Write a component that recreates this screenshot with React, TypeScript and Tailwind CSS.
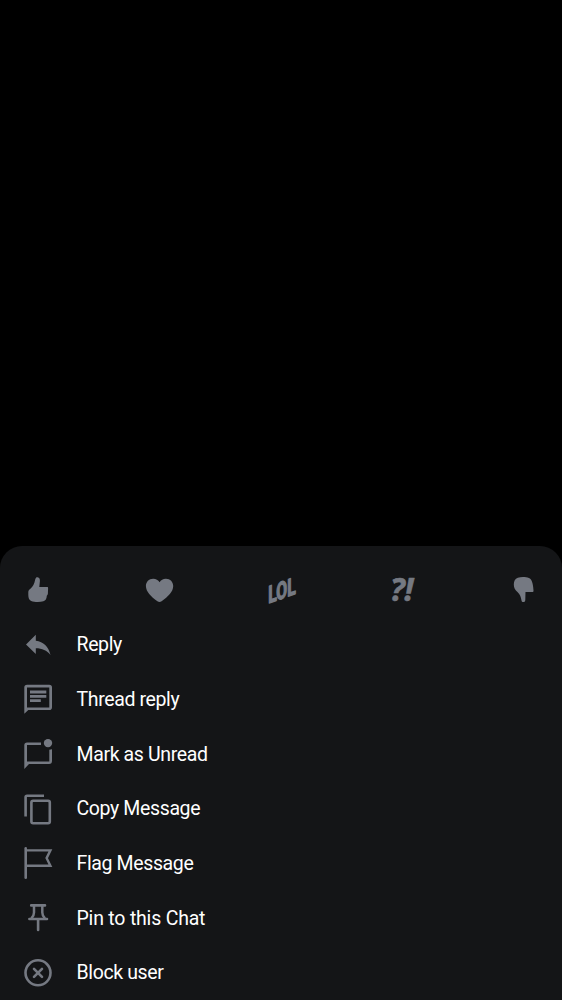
import type { ReactNode } from "react";

function Icon({ children }: { children: ReactNode }) {
  return (
    <svg viewBox="0 0 36 36" className="h-9 w-9 shrink-0 overflow-visible text-[#757982]" fill="none" stroke="currentColor" strokeWidth="2.6" aria-hidden="true">
      {children}
    </svg>
  );
}

const reactions: { name: string; art: ReactNode }[] = [
  {
    name: "like",
    art: (
      <path fill="currentColor" stroke="none" d="M15.2 7.6C15.8 5.3 16.6 5.1 17.6 5.3C19.5 5.6 20 7.2 19.9 9L19.3 15H27C27.9 15 28.2 15.5 28.1 16.4L27.9 21.5C27.8 22.6 27.4 23.1 26.8 23.7C26.7 26.5 25.5 28.7 23.4 29.3C20 30.2 14.5 30.2 11.2 29C9 28.1 8.4 26 8.3 23V20.2C8.3 18.6 9 17.8 10.4 16.7C12.9 14.8 14.4 12 15.2 7.6Z" />
    ),
  },
  {
    name: "love",
    art: (
      <path transform="translate(-0.6 0)" fill="currentColor" stroke="none" d="M18.2 10.2C19.5 7.8 22 6.6 24.6 6.7C28.8 6.8 31.8 9.8 31.8 14C31.8 19.8 26.8 24.5 20.2 29.2C18.7 30.3 17.5 30.3 16 29.2C9.4 24.5 4.6 19.8 4.5 14C4.5 9.8 7.5 6.8 11.7 6.7C14.3 6.6 16.8 7.8 18.2 10.2Z" />
    ),
  },
  {
    name: "laugh",
    art: (
      <text transform="translate(5.3 31.6) skewY(-20)" fill="currentColor" strokeWidth="1.4" strokeLinejoin="round" textLength="27.4" lengthAdjust="spacingAndGlyphs" className="font-['Roboto',sans-serif] text-[24px] font-bold">
        LOL
      </text>
    ),
  },
  {
    name: "surprise",
    art: (
      <g fill="currentColor" strokeWidth="0.6" strokeLinejoin="round" className="font-['Open_Sans',sans-serif] text-[32px] font-bold italic">
        <text x="5" y="29.3">?</text>
        <text x="19.2" y="29.3">!</text>
      </g>
    ),
  },
  {
    name: "dislike",
    art: (
      <path transform="translate(-0.6 0)" fill="currentColor" stroke="none" d="M8.4 12.5C8.4 9.4 9.6 6.5 12.4 5.7C15.8 4.8 20.5 4.9 23.5 6C26.4 7.2 27.3 10.8 27.8 15.2L28.1 18.5C28.2 19.6 27.8 20.1 26.8 20.1H20.1L19.9 27.7C19.9 29.4 19.2 30 18 30C16.9 30.1 16.4 29.6 16.1 28.4C15.5 25 14.6 22.3 12.3 20.2C9.6 17.8 8.4 15.7 8.4 12.5Z" />
    ),
  },
];

const actions: { label: string; tracking?: string; art: ReactNode }[] = [
  {
    label: "Reply",
    art: <path fill="currentColor" stroke="none" d="M6 17.5L15.8 7.8V13.8C23.5 14.8 28.5 19.5 30.5 28C26.8 23.3 22.2 21.4 15.8 21.3V27.1Z" />,
  },
  {
    label: "Thread reply",
    art: (
      <>
        <path fill="currentColor" stroke="none" fillRule="evenodd" d="M4.3 6.6Q4.3 3.8 7.1 3.8H29.2Q32 3.8 32 6.6V26.3Q32 29.1 29.2 29.1H8.3L4.3 32.7ZM7 6.5V26.4H29.3V6.5Z" />
        <path strokeWidth="2.8" d="M10 11H26.3M10 15.4H26.3M10 19.6H20.8" />
      </>
    ),
  },
  {
    label: "Mark as Unread",
    art: (
      <>
        <path fill="currentColor" stroke="none" d="M21 6.4H7.1Q4.3 6.4 4.3 9.2V33.1L9 28.1H29.2Q32 28.1 32 25.3V13.2L29.3 13.8V25.4H7V9H21Z" />
        <circle cx="28" cy="7.1" r="4.2" fill="currentColor" stroke="none" />
      </>
    ),
  },
  {
    label: "Copy Message",
    art: (
      <>
        <path d="M24 4.8H7.1Q5.6 4.8 5.6 6.3V25.5" />
        <rect x="11.4" y="9.8" width="18.4" height="22.4" rx="1.7" />
      </>
    ),
  },
  {
    label: "Flag Message",
    art: (
      <>
        <path strokeLinecap="round" d="M5.7 3.4V32.8" />
        <path strokeWidth="2.4" d="M6 5.4H30.4L26.6 13.1L30.4 20.8H6" />
      </>
    ),
  },
  {
    label: "Pin to this Chat",
    tracking: "tracking-[-0.2px]",
    art: (
      <>
        <path strokeWidth="2.6" strokeLinecap="round" d="M11.2 5.4H25M9.4 19H27M18.1 19V30" />
        <path strokeWidth="2.5" d="M14 5.5V12.5Q14 16 11.3 18.5M22.3 5.5V12.5Q22.3 16 25 18.5" />
      </>
    ),
  },
  {
    label: "Block user",
    art: (
      <>
        <circle cx="18" cy="17.8" r="12.5" />
        <path strokeLinecap="round" d="M14 13.8L22 21.8M22 13.8L14 21.8" />
      </>
    ),
  },
];

export default function App() {
  return (
    <main className="flex h-[1000px] w-[562px] flex-col justify-end overflow-hidden bg-black font-['Roboto',sans-serif]">
      <section className="h-[454px] rounded-t-[22px] bg-[#141517] pt-[26px]">
        <div className="flex h-9 justify-between px-5">
          {reactions.map(({ name, art }) => (
            <button key={name} type="button">
              <Icon>{art}</Icon>
            </button>
          ))}
        </div>
        <ul className="mt-[9.4px]">
          {actions.map(({ label, tracking = "tracking-[-0.37px]", art }) => (
            <li key={label} className="flex h-[54.67px] items-center gap-[20.5px] px-5">
              <Icon>{art}</Icon>
              <span className={`pt-[1.2px] text-[19.5px] leading-6 text-white ${tracking}`}>{label}</span>
            </li>
          ))}
        </ul>
      </section>
    </main>
  );
}
